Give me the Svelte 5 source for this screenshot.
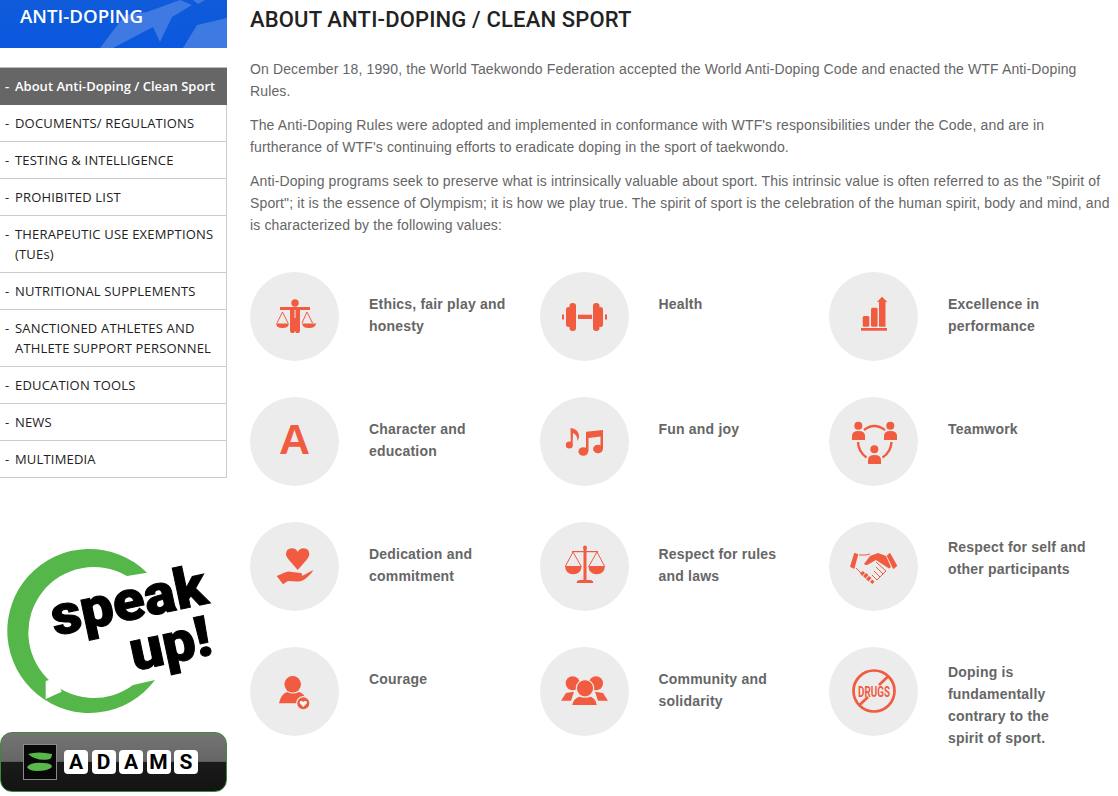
<script lang="ts">
  const menu = [
    { label: "About Anti-Doping / Clean Sport", active: true },
    { label: "DOCUMENTS/ REGULATIONS" },
    { label: "TESTING & INTELLIGENCE" },
    { label: "PROHIBITED LIST" },
    { label: "THERAPEUTIC USE EXEMPTIONS (TUEs)" },
    { label: "NUTRITIONAL SUPPLEMENTS" },
    { label: "SANCTIONED ATHLETES AND ATHLETE SUPPORT PERSONNEL" },
    { label: "EDUCATION TOOLS" },
    { label: "NEWS" },
    { label: "MULTIMEDIA" },
  ];

  const values = [
    { icon: "ethics", text: "Ethics, fair play and honesty" },
    { icon: "health", text: "Health" },
    { icon: "chart", text: "Excellence in performance" },
    { icon: "char", text: "Character and education" },
    { icon: "music", text: "Fun and joy" },
    { icon: "team", text: "Teamwork" },
    { icon: "heart", text: "Dedication and commitment" },
    { icon: "scales", text: "Respect for rules and laws" },
    { icon: "shake", text: "Respect for self and other participants", high: true },
    { icon: "courage", text: "Courage" },
    { icon: "people", text: "Community and solidarity" },
    { icon: "drugs", text: "Doping is fundamentally contrary to the spirit of sport.", high: true },
  ];
</script>

<div class="page">
  <aside>
    <div class="banner">
      <svg class="banner-art" viewBox="0 0 227 48" aria-hidden="true">
        <polygon points="100,48 125,15 147,12 180,0 192,5 172,17 160,42 153,27 113,48" />
        <polygon points="183,48 197,25 227,18 227,48" />
        <polygon points="193,0 205,0 198,4" />
      </svg>
      <span>ANTI-DOPING</span>
    </div>

    <ul class="menu">
      {#each menu as item}
        <li class:active={item.active}>
          <span class="dash">-</span>
          <a href="#top">{item.label}</a>
        </li>
      {/each}
    </ul>

    <svg class="speak" viewBox="0 0 227 185" role="img" aria-label="speak up!">
      <path
        class="ring"
        d="M147 34.7 A82 82 0 1 0 155 142 L133 147 A65.5 65.5 0 1 1 127 38 Z"
      />
      <polygon class="tail" points="45.7,143 45.7,161 61.7,153.7 56,140" />
      <text class="speak-text" transform="translate(55 98) rotate(-12)" textLength="158" lengthAdjust="spacingAndGlyphs">speak</text>
      <text class="speak-text" transform="translate(134 133) rotate(-12)" textLength="82" lengthAdjust="spacingAndGlyphs">up!</text>
    </svg>

    <div class="adams">
      <svg class="adams-logo" viewBox="0 0 34 36" aria-hidden="true">
        <rect x="0.5" y="0.5" width="33" height="35" fill="#080808" stroke="#8a8a8a" />
        <path d="M5 10 Q15 7 29 10 Q29 15 25 15.5 Q13 17 5 10 Z" fill="#58b84a" />
        <path d="M4 23 Q8 18 20 19 Q29 19 29 23 Q25 27 14 27 Q6 27 4 23 Z" fill="#58b84a" />
      </svg>
      <div class="keys">
        {#each ["A", "D", "A", "M", "S"] as key}
          <span>{key}</span>
        {/each}
      </div>
    </div>
  </aside>

  <main>
    <h1>ABOUT ANTI-DOPING / CLEAN SPORT</h1>
    <p>On December 18, 1990, the World Taekwondo Federation accepted the World Anti-Doping Code and enacted the WTF Anti-Doping Rules.</p>
    <p>The Anti-Doping Rules were adopted and implemented in conformance with WTF's responsibilities under the Code, and are in furtherance of WTF's continuing efforts to eradicate doping in the sport of taekwondo.</p>
    <p>Anti-Doping programs seek to preserve what is intrinsically valuable about sport. This intrinsic value is often referred to as the "Spirit of Sport"; it is the essence of Olympism; it is how we play true. The spirit of sport is the celebration of the human spirit, body and mind, and is characterized by the following values:</p>

    <div class="values">
      {#each values as v}
        <div class="value">
          <div class="circle">
            <svg viewBox="0 0 89 89" aria-hidden="true">
              {#if v.icon === "ethics"}
                <circle cx="45" cy="31" r="3.7" />
                <path d="M30 35 H60 V38 H50 V59 Q50 61 48 61 H46 L45 59 L44 61 H42 Q40 61 40 59 V38 H30 Z" />
                <path class="cut" d="M45 38 V46" />
                <path class="thin" d="M32.5 40 L27 51 M32.5 40 L38 51 M57 40 L52 51 M57 40 L62.5 51 " />
                <path d="M26 51.5 H39 Q38.5 56 32.5 56 Q26.5 56 26 51.5 Z M52 51.5 H66 Q65.5 56 59 56 Q52.5 56 52 51.5 Z" />
              {:else if v.icon === "health"}
                <rect x="38" y="42.7" width="14" height="4.3" />
                <rect x="29.5" y="31" width="6.5" height="28" rx="3" />
                <rect x="53" y="31" width="6.5" height="28" rx="3" />
                <rect x="26" y="35" width="5" height="20" rx="2.5" />
                <rect x="58" y="35" width="5" height="20" rx="2.5" />
                <rect x="22" y="42.5" width="2" height="5" />
                <rect x="65" y="42.5" width="2" height="5" />
              {:else if v.icon === "chart"}
                <rect x="33.7" y="44" width="6.6" height="10.7" rx="1.5" />
                <rect x="42" y="35.7" width="6.6" height="19" rx="1.5" />
                <path d="M53 24.7 L58.3 30 H56.5 V54.7 H50 V30 H48 Z" />
                <rect x="32" y="56" width="26" height="2.7" />
              {:else if v.icon === "char"}
                <text class="letter" x="44.5" y="57">A</text>
              {:else if v.icon === "music"}
                <circle cx="29.3" cy="48" r="3.5" />
                <path d="M30.8 48 L30.5 31 Q38 32 39 38 Q39.5 41 37.5 44 Q37.5 38 33 36 L32.6 48 Z" />
                <ellipse cx="43.3" cy="54.5" rx="4.9" ry="4.2" />
                <ellipse cx="58" cy="52" rx="4.9" ry="4.2" />
                <path d="M46 54 V34.7 L63 33 V52 H60.5 V39.5 L48.5 41 V54 Z" />
              {:else if v.icon === "team"}
                <circle cx="29.3" cy="28.7" r="4" />
                <path d="M23 43 V39 Q23 34 29.5 34 Q36 34 36 39 V43 Z" />
                <circle cx="61.3" cy="28.7" r="4" />
                <path d="M55 43 V39 Q55 34 61.5 34 Q68 34 68 39 V43 Z" />
                <circle cx="45.3" cy="52.3" r="4" />
                <path d="M39 67 V63 Q39 58 45.5 58 Q52 58 52 63 V67 Z" />
                <path class="line" d="M35 33 Q45 25 56 33 M29 45 Q29.5 55 37.5 60.5 M62.5 45 Q62 55 53.5 60.5" />
              {:else if v.icon === "heart"}
                <path d="M47.7 48 L39 38 Q36 34 36 32.5 Q36 26.3 42 26.3 Q46 26.3 47.7 30 Q49.5 26.3 53.5 26.3 Q59.3 26.3 59.3 32.5 Q59.3 34 56.5 38 Z" />
                <path d="M26.7 54 L36 50 Q39 49 42 50 L51 51 Q53 52 52 53.5 L44 54 L53 53.5 L63.3 48 Q62 51 57 55.5 Q52 60 47 59.5 L38 59 L33 62.3 Z" />
              {:else if v.icon === "courage"}
                <circle cx="42.7" cy="37.3" r="8.3" />
                <path d="M29 56.3 Q31 47 37 45 Q43 48 49 45 Q53 46 55 50 L46 56.3 Z" />
                <circle cx="53.3" cy="56.3" r="7.2" fill="#ececec" />
                <circle cx="53.3" cy="56.3" r="6" />
                <path class="white" d="M53.3 60 L50 56.5 Q49 54 51.3 54 Q52.8 54 53.3 55.2 Q53.8 54 55.3 54 Q57.6 54 56.6 56.5 Z" />
              {:else if v.icon === "scales"}
                <rect x="43.5" y="26" width="3" height="32" />
                <circle cx="45" cy="25.5" r="2" />
                <path d="M36.7 61 Q36.7 58 40 58 H50 Q53.3 58 53.3 61 Z" />
                <rect x="32" y="29" width="26" height="1.2" />
                <path class="thin" d="M33 30 L25.5 44 M33 30 L41 44 M57 30 L49 44 M57 30 L64.5 44" />
                <path d="M25 44 H41.7 Q41 52.3 33.3 52.3 Q25.7 52.3 25 44 Z M48.3 44 H65 Q64.3 52.3 56.7 52.3 Q49 52.3 48.3 44 Z" />
              {:else if v.icon === "shake"}
                <polygon points="25.3,30.7 29.3,32.3 25.3,47 21,44.7" />
                <polygon points="61,30.7 68.3,43.7 64.3,47.3 57.7,33.7" />
                <path d="M35 42 L41 34 L49 31 L57 34 L62 45 L60 46.5 L47 38 L40 42 Q37 44 35 42 Z" />
                <path class="thin" d="M30 33 L37 33 L41 32 M27 46 L34 53 M47 40 L57 49 L54 52 L47 45 M54 52 L51 55 L45 49 M51 55 L48 58 L43 53" />
                <path d="M31 51 L34 49 L36 51 L33 54 Z M34 54 L37 51 L39.5 53 L36.5 56.5 Z M37 57 L40 54 L42.5 56 L39.5 59.5 Z M41 60 L43 57.5 L45.5 59.5 L43.5 62 Z" />
              {:else if v.icon === "people"}
                <circle cx="32.7" cy="36.3" r="7" />
                <circle cx="56" cy="36.3" r="7" />
                <path d="M21 53.7 L26 46 L34 44.7 L31 53.7 Z M68 53.7 L63 46 L55 44.7 L58 53.7 Z" />
                <circle cx="45" cy="41.3" r="8.7" stroke="#ececec" stroke-width="1.2" />
                <path d="M32.3 58 Q33 52 39 49.7 Q45 52 51 49.7 Q56 52 56.7 58 Z" />
              {:else if v.icon === "drugs"}
                <circle class="ban" cx="45" cy="44" r="20.5" />
                <path class="ban-line" d="M59 29.5 L50 38 M39 50 L30 58.5" />
                <text class="drugs" x="45" y="49.5" textLength="32" lengthAdjust="spacingAndGlyphs">DRUGS</text>
              {/if}
            </svg>
          </div>
          <div class="label" class:high={v.high}>{v.text}</div>
        </div>
      {/each}
    </div>
  </main>
</div>

<style>
  :global(body) {
    background: #fff;
  }
  .page {
    display: flex;
    width: 1118px;
    height: 796px;
    overflow: hidden;
    font-family: "Liberation Sans", Arial, sans-serif;
  }
  aside {
    flex: none;
    width: 227px;
  }
  .banner {
    position: relative;
    height: 48px;
    box-sizing: border-box;
    padding: 3px 0 0 20px;
    background: linear-gradient(#0f5bd9, #0a58df);
    color: #fff;
    font: 600 18.7px/26px "Open Sans", sans-serif;
    overflow: hidden;
  }
  .banner span {
    position: relative;
  }
  .banner-art {
    position: absolute;
    left: 0;
    top: 0;
    width: 227px;
    height: 48px;
  }
  .banner-art polygon {
    fill: #3f7ae3;
  }
  .menu {
    list-style: none;
    margin: 19px 0 0;
    padding: 0;
    border-right: 1px solid #ccc;
    font: 400 13px/20px "Open Sans", sans-serif;
    letter-spacing: 0.18px;
    color: #222;
  }
  .menu li {
    display: flex;
    padding: 8px 10px 8px 5px;
    border-bottom: 1px solid #ccc;
  }
  .menu .dash {
    flex: none;
    width: 10px;
  }
  .menu a {
    color: inherit;
    text-decoration: none;
  }
  .menu li.active {
    background: #666;
    color: #fff;
    font-weight: 600;
    letter-spacing: 0;
    margin-right: -1px;
    padding-bottom: 9px;
    border-top: 1px solid #bbb;
    border-bottom: 0;
  }
  .speak {
    display: block;
    width: 227px;
    height: 185px;
    margin-top: 60px;
  }
  .ring {
    fill: #55b74a;
  }
  .tail {
    fill: #fff;
  }
  .speak-text {
    font: 900 56px "Roboto", sans-serif;
    fill: #000;
    stroke: #000;
    stroke-width: 1;
  }
  .adams {
    display: flex;
    align-items: center;
    gap: 7px;
    box-sizing: border-box;
    height: 60px;
    margin-top: 9px;
    padding-left: 22px;
    border: 1px solid #3e8a3a;
    border-radius: 12px;
    background: linear-gradient(#747474 0, #666 49%, #1a1a1a 50%, #141414 100%);
  }
  .adams-logo {
    flex: none;
    width: 34px;
    height: 36px;
  }
  .keys {
    display: flex;
    gap: 3.5px;
  }
  .keys span {
    width: 24px;
    height: 24px;
    border-radius: 4px;
    background: #fff;
    color: #000;
    font: 700 21px/24px "Roboto", sans-serif;
    text-align: center;
  }
  main {
    flex: 1;
    min-width: 0;
    padding-left: 23px;
    padding-right: 6px;
  }
  h1 {
    margin: 0 0 24px;
    padding-top: 6px;
    font: 500 22px/28px "Roboto", sans-serif;
    letter-spacing: 0.16px;
    color: #222;
  }
  p {
    margin: 0 0 12px;
    font-size: 14px;
    line-height: 22px;
    letter-spacing: 0.13px;
    color: #666;
  }
  .values {
    display: grid;
    grid-template-columns: repeat(3, 289.5px);
    grid-auto-rows: 125px;
    margin-top: 36px;
  }
  .value {
    display: flex;
    gap: 30px;
  }
  .circle {
    flex: none;
    width: 89px;
    height: 89px;
    border-radius: 50%;
    background: #ececec;
  }
  .circle svg {
    display: block;
    width: 89px;
    height: 89px;
    fill: #f15b40;
  }
  .label {
    width: 139px;
    padding-top: 21px;
    font-size: 14px;
    font-weight: 700;
    line-height: 22px;
    letter-spacing: 0.2px;
    color: #666;
  }
  .label.high {
    padding-top: 14px;
  }
  .letter {
    font: 700 43px "Liberation Sans", sans-serif;
    text-anchor: middle;
  }
  .thin {
    fill: none;
    stroke: #f15b40;
    stroke-width: 1;
  }
  .cut {
    fill: none;
    stroke: #ececec;
    stroke-width: 1;
  }
  .line {
    fill: none;
    stroke: #f15b40;
    stroke-width: 2.4;
  }
  .white {
    fill: #fff;
  }
  .ban {
    fill: none;
    stroke: #f15b40;
    stroke-width: 2.7;
  }
  .ban-line {
    fill: none;
    stroke: #f15b40;
    stroke-width: 2.7;
  }
  .drugs {
    font: 700 15px "Roboto", sans-serif;
    text-anchor: middle;
  }
</style>
